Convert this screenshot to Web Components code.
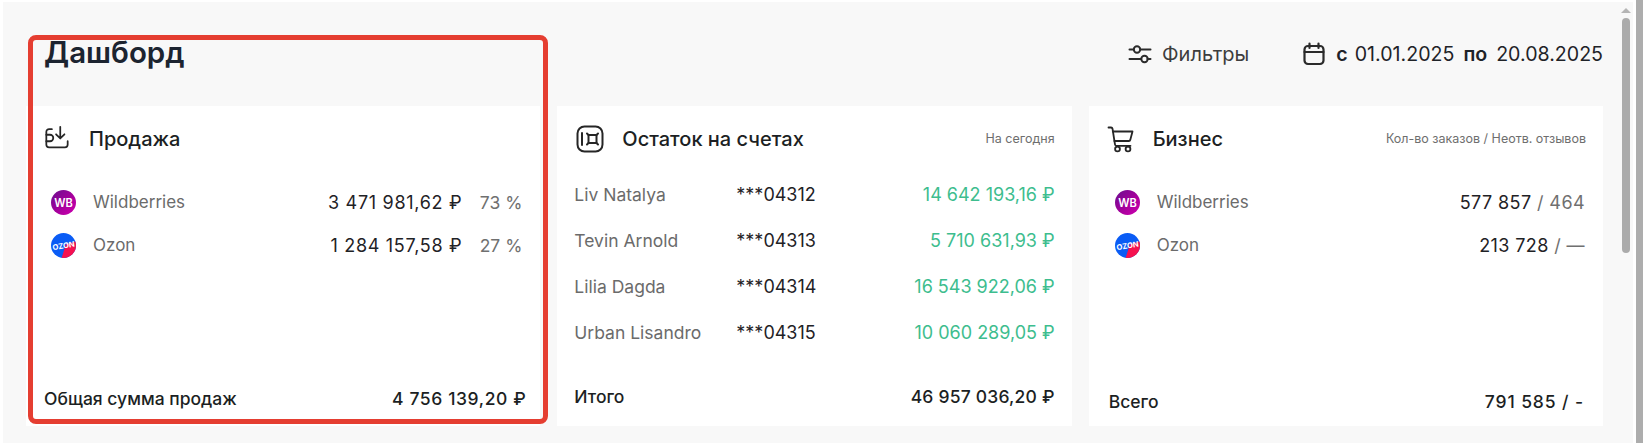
<!DOCTYPE html>
<html lang="ru">
<head>
<meta charset="utf-8">
<title>Дашборд</title>
<style>
  html, body {
    margin: 0;
    height: 100%;
    overflow: hidden;
    background: #ffffff;
    font-family: Inter, "Liberation Sans", sans-serif;
  }
</style>
</head>
<body>
<dash-page>
  <span slot="title">Дашборд</span>
  <dash-filters slot="actions"></dash-filters>

  <dash-card title="Продажа" icon="sale">
    <brand-row brand="wb" name="Wildberries" value="3 471 981,62 ₽" extra="73 %"></brand-row>
    <brand-row brand="ozon" name="Ozon" value="1 284 157,58 ₽" extra="27 %"></brand-row>
    <span slot="total-label">Общая сумма продаж</span>
    <span slot="total-value">4 756 139,20 ₽</span>
  </dash-card>

  <dash-card title="Остаток на счетах" icon="safe" hint="На сегодня" kind="accounts">
    <account-row name="Liv Natalya" number="***04312" value="14 642 193,16 ₽"></account-row>
    <account-row name="Tevin Arnold" number="***04313" value="5 710 631,93 ₽"></account-row>
    <account-row name="Lilia Dagda" number="***04314" value="16 543 922,06 ₽"></account-row>
    <account-row name="Urban Lisandro" number="***04315" value="10 060 289,05 ₽"></account-row>
    <span slot="total-label">Итого</span>
    <span slot="total-value">46 957 036,20 ₽</span>
  </dash-card>

  <dash-card title="Бизнес" icon="cart" hint="Кол-во заказов / Неотв. отзывов" kind="business">
    <brand-row brand="wb" name="Wildberries" value="577 857" suffix=" / 464" tight></brand-row>
    <brand-row brand="ozon" name="Ozon" value="213 728" suffix=" / —" tight></brand-row>
    <span slot="total-label">Всего</span>
    <span slot="total-value">791 585 / -</span>
  </dash-card>
</dash-page>

<script>
const ICONS = {
  sale: `<svg width="26" height="26" viewBox="0 0 28 28" fill="none" stroke="#262626" stroke-width="1.9" stroke-linecap="round" stroke-linejoin="round">
    <path d="M8.5 4.5H5.5a3 3 0 0 0-3 3v13.500a3 3 0 0 0 3 3h17a3 3 0 0 0 3-3v-3.500"/>
    <path d="M2.500 10.500h4a3.500 3.500 0 0 1 0 7h-4"/>
    <path d="M17.500 2v12M13 10l4.500 4.500L22 10"/>
  </svg>`,
  safe: `<svg width="28" height="28" viewBox="0 0 28 28" fill="none" stroke="#262626" stroke-width="2" stroke-linecap="round" stroke-linejoin="round">
    <rect x="1.500" y="1.500" width="25" height="25" rx="7"/>
    <path d="M6 8v12"/>
    <rect x="12.500" y="10" width="8" height="8"/>
    <path d="M12.500 10l-1.500-1.500M20.500 10L22 8.500M12.500 18L11 19.500M20.500 18L22 19.500"/>
  </svg>`,
  cart: `<svg width="28" height="28" viewBox="0 0 28 28" fill="none" stroke="#262626" stroke-width="1.800" stroke-linecap="round" stroke-linejoin="round">
    <path d="M1.500 2.500h2.500a1.500 1.500 0 0 1 1.500 1.200L8 19.500a1.500 1.500 0 0 0 1.500 1.300h14"/>
    <path d="M5.800 6.500h19.700l-2.200 8.300a1.500 1.500 0 0 1-1.500 1.200H7.400"/>
    <circle cx="10.500" cy="24" r="2.400"/>
    <circle cx="21" cy="24" r="2.400"/>
  </svg>`,
  filter: `<svg width="24" height="24" viewBox="0 0 24 24" fill="none" stroke="#2b2b2b" stroke-width="2" stroke-linecap="round">
    <path d="M1.500 7.500h4M12.500 7.500h10M1.500 17h11.500M19.500 17h3"/>
    <circle cx="9" cy="7.500" r="3.200"/>
    <circle cx="16.500" cy="17" r="3.200"/>
  </svg>`,
  calendar: `<svg width="24" height="24" viewBox="0 0 24 24" fill="none" stroke="#2b2b2b" stroke-width="2.200" stroke-linecap="round" stroke-linejoin="round">
    <rect x="2.500" y="4" width="19" height="18" rx="3.500"/>
    <path d="M2.500 10h19M7.500 1.500v4.500M16.500 1.500v4.500"/>
  </svg>`
};

const BRANDS = {
  wb: `<svg width="25" height="25" viewBox="0 0 26 26">
    <defs><linearGradient id="wb" x1="0" y1="0" x2="1" y2="1"><stop offset="0" stop-color="#6a0f8e"/><stop offset=".55" stop-color="#a6009c"/><stop offset="1" stop-color="#d000b0"/></linearGradient></defs>
    <circle cx="13" cy="13" r="13" fill="url(#wb)"/>
    <text x="13" y="17.200" text-anchor="middle" font-family="Inter, sans-serif" font-size="11.500" font-weight="600" fill="#fff">WB</text>
  </svg>`,
  ozon: `<svg width="25" height="25" viewBox="0 0 26 26">
    <defs><clipPath id="oz"><circle cx="13" cy="13" r="13"/></clipPath></defs>
    <g clip-path="url(#oz)">
      <rect width="26" height="26" fill="#0a5cf5"/>
      <path d="M26 8.500L26 26H11L15.500 12Z" fill="#f5114f"/>
    </g>
    <text x="13" y="16" text-anchor="middle" font-family="Inter, sans-serif" font-size="8" font-weight="700" fill="#fff" transform="rotate(-10 13 13)">OZON</text>
  </svg>`
};

class DashPage extends HTMLElement {
  constructor() {
    super();
    const shadowRoot = this.attachShadow({mode: 'open'});

    shadowRoot.innerHTML = `
      <style>
        :host {
          display: block;
          position: relative;
          height: 443px;
          padding: 2px 0 0 3px;
          box-sizing: border-box;
          color: #1c2024;
        }
        #panel {
          box-sizing: border-box;
          height: 441px;
          width: 1630px;
          background: #f8f8f8;
          padding: 0 30px 17px 23px;
          display: flex;
          flex-direction: column;
        }
        header {
          height: 104px;
          display: flex;
          justify-content: space-between;
          flex: none;
        }
        h1 {
          margin: 33px 0 0 18px;
          font-size: 29.500px;
          line-height: 34px;
          font-weight: 600;
          color: #1c2430;
        }
        #cards {
          flex: 1;
          display: grid;
          grid-template-columns: repeat(3, 1fr);
          gap: 17px;
          min-height: 0;
        }
        #highlight {
          position: absolute;
          left: 28px;
          top: 35px;
          width: 520px;
          height: 389px;
          box-sizing: border-box;
          border: 5px solid #e53e31;
          border-radius: 8px;
          pointer-events: none;
        }
        #arrow {
          position: absolute;
          top: 8px;
          left: 1621px;
          width: 0;
          height: 0;
          border: 5px solid transparent;
          border-top: 0;
          border-bottom: 5px solid #b5b5b5;
        }
        #thumb {
          position: absolute;
          top: 18px;
          left: 1622px;
          width: 8px;
          height: 235px;
          border-radius: 4px;
          background: #ababab;
        }
        #outer-scroll {
          position: absolute;
          top: 0;
          right: 0;
          bottom: 0;
          width: 7px;
          background: #adadad;
        }
      </style>
      <div id="panel">
        <header>
          <h1><slot name="title"></slot></h1>
          <slot name="actions"></slot>
        </header>
        <div id="cards"><slot></slot></div>
      </div>
      <div id="highlight"></div>
      <div id="arrow"></div>
      <div id="thumb"></div>
      <div id="outer-scroll"></div>
    `;
  }
}

class DashFilters extends HTMLElement {
  constructor() {
    super();
    const shadowRoot = this.attachShadow({mode: 'open'});

    shadowRoot.innerHTML = `
      <style>
        :host {
          display: flex;
          align-items: center;
          height: 24px;
          margin-top: 40px;
          font-size: 19.600px;
          color: #1f2328;
        }
        .item {
          display: flex;
          align-items: center;
        }
        #filters {
          gap: 10px;
          color: #3d3d3d;
          margin-right: 53px;
          font-size: 20px;
        }
        #dates {
          gap: 10px;
        }
        b {
          font-weight: 600;
        }
        #range b { margin: 0 9px; }
        #range b:first-child { margin: 0 7px 0 0; }
      </style>
      <div class="item" id="filters">${ICONS.filter}<span>Фильтры</span></div>
      <div class="item" id="dates">${ICONS.calendar}<span id="range"><b>с</b>01.01.2025<b>по</b>20.08.2025</span></div>
    `;
  }
}

class DashCard extends HTMLElement {
  constructor() {
    super();
    this.attachShadow({mode: 'open'});
  }

  connectedCallback() {
    const title = this.getAttribute('title');
    const icon = this.getAttribute('icon');
    const hint = this.getAttribute('hint') || '';

    this.shadowRoot.innerHTML = `
      <style>
        :host {
          display: flex;
          flex-direction: column;
          background: #ffffff;
          min-width: 0;
          box-sizing: border-box;
          padding: 13px 0 8px 18px;
        }
        :host([kind="accounts"]) { padding-left: 17px; }
        :host([kind="business"]) { padding-left: 20px; padding-bottom: 7px; }
        #head {
          display: flex;
          align-items: center;
          height: 40px;
          flex: none;
        }
        #icon { width: 28px; height: 28px; display: block; margin-right: 17px; }
        :host([kind="accounts"]) #icon { margin-left: 2px; margin-right: 18px; }
        :host([kind="business"]) #icon { margin-left: -2px; margin-right: 18px; }
        #title { font-size: 20px; font-weight: 500; color: #1c1f23; flex: 1; }
        #hint { font-size: 12.500px; color: #6e6e6e; margin-right: 17px; margin-bottom: 2px; }
        #rows {
          flex: 1;
          display: flex;
          flex-direction: column;
          margin-top: 30px;
          gap: 17px;
        }
        :host([kind="accounts"]) #rows { gap: 0; margin-top: 12px; }
        #total {
          flex: none;
          height: 40px;
          display: flex;
          justify-content: space-between;
          align-items: center;
          font-size: 17.500px;
          font-weight: 450;
          color: #1c1f23;
          padding-right: 14px;
        }
        :host([kind="accounts"]) #total { height: 44px; padding-right: 17px; }
        :host([kind="business"]) #total { height: 36px; padding-right: 19px; }
        ::slotted([slot="total-value"]) { letter-spacing: .6px; }
        :host([kind="accounts"]) ::slotted([slot="total-value"]) { letter-spacing: .2px; }
        :host([kind="business"]) ::slotted([slot="total-value"]) { letter-spacing: .9px; }
      </style>
      <div id="head">
        <div id="icon">${ICONS[icon]}</div>
        <div id="title">${title}</div>
        ${hint ? `<div id="hint">${hint}</div>` : ''}
      </div>
      <div id="rows"><slot></slot></div>
      <div id="total"><slot name="total-label"></slot><slot name="total-value"></slot></div>
    `;
  }
}

class BrandRow extends HTMLElement {
  constructor() {
    super();
    this.attachShadow({mode: 'open'});
  }

  connectedCallback() {
    const brand = this.getAttribute('brand');
    const extra = this.getAttribute('extra');
    const suffix = this.getAttribute('suffix');

    this.shadowRoot.innerHTML = `
      <style>
        :host {
          display: flex;
          align-items: center;
          height: 26px;
          font-size: 17px;
          padding: 0 18px 0 7px;
        }
        :host([tight]) { padding-left: 6px; }
        #logo { width: 25px; height: 25px; margin-right: 17px; }
        #name { color: #6b6b6b; flex: 1; }
        #value { color: #1f2226; font-size: 18px; letter-spacing: .7px; }
        :host([tight]) #value { letter-spacing: .4px; }
        #extra { color: #707070; width: 60px; text-align: right; font-size: 17.500px; }
        #suffix { color: #707070; white-space: pre; font-size: 18px; letter-spacing: .4px; }
      </style>
      <div id="logo">${BRANDS[brand]}</div>
      <div id="name">${this.getAttribute('name')}</div>
      <div id="value">${this.getAttribute('value')}</div>
      ${suffix ? `<div id="suffix">${suffix}</div>` : ''}
      ${extra ? `<div id="extra">${extra}</div>` : ''}
    `;
  }
}

class AccountRow extends HTMLElement {
  constructor() {
    super();
    this.attachShadow({mode: 'open'});
  }

  connectedCallback() {
    this.shadowRoot.innerHTML = `
      <style>
        :host {
          display: flex;
          align-items: center;
          height: 46px;
          font-size: 17.500px;
          padding-right: 17px;
        }
        #name { color: #6b6b6b; width: 162px; }
        #number { color: #1f2226; font-size: 18px; }
        #value { color: #3dbd8e; margin-left: auto; font-size: 18px; }
      </style>
      <div id="name">${this.getAttribute('name')}</div>
      <div id="number">${this.getAttribute('number')}</div>
      <div id="value">${this.getAttribute('value')}</div>
    `;
  }
}

customElements.define('dash-page', DashPage);
customElements.define('dash-filters', DashFilters);
customElements.define('dash-card', DashCard);
customElements.define('brand-row', BrandRow);
customElements.define('account-row', AccountRow);
</script>
</body>
</html>
